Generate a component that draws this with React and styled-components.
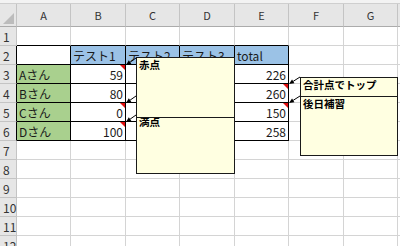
import React from 'react';
import styled, { createGlobalStyle } from 'styled-components';

const GlobalStyle = createGlobalStyle`
	html, body {
		margin: 0;
		padding: 0;
		background: #ffffff;
	}
	body {
		font-family: "Noto Sans CJK JP", "Noto Sans", sans-serif;
		overflow: hidden;
	}
`;

const GRID = '#d4d4d4';
const HEAD_LINE = '#c4c4c4';
const INK = '#000000';

const COLS = ['A', 'B', 'C', 'D', 'E', 'F', 'G'];
const WIDTHS = [54, 55, 54, 55, 54, 55, 54];
const ROWS = 12;

//Cell contents of the score table
const CELLS = {
	B2: { text: 'テスト1', bg: '#9bc2e6' },
	C2: { text: 'テスト2', bg: '#9bc2e6' },
	D2: { text: 'テスト3', bg: '#9bc2e6' },
	E2: { text: 'total', bg: '#9bc2e6' },
	A3: { text: 'Aさん', bg: '#a9d08e' },
	A4: { text: 'Bさん', bg: '#a9d08e' },
	A5: { text: 'Cさん', bg: '#a9d08e' },
	A6: { text: 'Dさん', bg: '#a9d08e' },
	B3: { text: '59', right: true, note: true },
	B4: { text: '80', right: true },
	B5: { text: '0', right: true, note: true },
	B6: { text: '100', right: true, note: true },
	E3: { text: '226', right: true },
	E4: { text: '260', right: true, note: true },
	E5: { text: '150', right: true, note: true },
	E6: { text: '258', right: true },
};

const inTable = (col, row) => row >= 2 && row <= 6 && col <= 4;

const Sheet = styled.div`
	position: relative;
	width: 400px;
	height: 246px;
	overflow: hidden;
`;

const TopStrip = styled.div`
	height: 3px;
	background: #f3f3f3;
	border-bottom: 1px solid #cfcfcf;
`;

const Grid = styled.div`
	display: grid;
	grid-template-columns: 17px ${WIDTHS.map((w) => `${w}px`).join(' ')} 1fr;
	grid-template-rows: 23px repeat(${ROWS}, 19px);
`;

const Corner = styled.div`
	position: relative;
	box-sizing: border-box;
	background: #e6e6e6;
	border-right: 1px solid ${HEAD_LINE};
	border-bottom: 1px solid #ababab;

	&::after {
		content: '';
		position: absolute;
		right: 2px;
		bottom: 2px;
		border-left: 11px solid transparent;
		border-bottom: 11px solid #bcbcbc;
	}
`;

const ColHead = styled.div`
	box-sizing: border-box;
	background: #e6e6e6;
	border-right: 1px solid ${HEAD_LINE};
	border-bottom: 1px solid #ababab;
	display: flex;
	align-items: center;
	justify-content: center;
	font-size: 11px;
	color: #333333;
`;

const RowHead = styled.div`
	box-sizing: border-box;
	background: #e6e6e6;
	border-right: 1px solid ${(p) => (p.$dark ? INK : HEAD_LINE)};
	border-bottom: 1px solid ${HEAD_LINE};
	display: flex;
	align-items: center;
	padding-left: 3px;
	font-size: 12px;
	color: #333333;
`;

const Cell = styled.div`
	position: relative;
	box-sizing: border-box;
	background: ${(p) => p.$bg || '#ffffff'};
	border-right: 1px solid ${(p) => (p.$darkRight ? INK : GRID)};
	border-bottom: 1px solid ${(p) => (p.$darkBottom ? INK : GRID)};
	display: flex;
	align-items: center;
	justify-content: ${(p) => (p.$right ? 'flex-end' : 'flex-start')};
	padding: 0 2px 0 2px;
	font-size: 12px;
	color: #1a1a1a;
	white-space: nowrap;
	overflow: hidden;
`;

//Red comment indicator in the top-right corner of a cell
const NoteMark = styled.span`
	position: absolute;
	top: 0;
	right: 0;
	width: 0;
	height: 0;
	border-top: 5px solid #e01010;
	border-left: 5px solid transparent;
`;

const Note = styled.div`
	position: absolute;
	box-sizing: border-box;
	background: #ffffe1;
	border: 1px solid #1a1a1a;
	padding: ${(p) => (p.$clipped ? '0 2px' : '1px 2px')};
	font-size: 10.5px;
	font-weight: bold;
	line-height: ${(p) => (p.$clipped ? '8px' : '12px')};
	color: #000000;
	overflow: hidden;
`;

const Arrows = styled.svg`
	position: absolute;
	left: 0;
	top: 0;
	pointer-events: none;
`;

const NOTES = [
	{ text: '赤点', x: 136, y: 57, w: 99, h: 61 },
	{ text: '満点', x: 136, y: 117, w: 99, h: 57, clipped: true },
	{ text: '合計点でトップ', x: 300, y: 77, w: 98, h: 20 },
	{ text: '後日補習', x: 300, y: 96, w: 98, h: 60 },
];

//Leader lines from each note to the cell it belongs to
const LEADERS = [
	[136, 58, 126, 65],
	[136, 96, 126, 103],
	[136, 115, 126, 122],
	[300, 77, 289, 84],
	[300, 96, 289, 103],
];

const Leader = ({ from, to }) => {
	const [x1, y1] = from;
	const [x2, y2] = to;
	const len = Math.hypot(x2 - x1, y2 - y1);
	const ux = (x2 - x1) / len;
	const uy = (y2 - y1) / len;
	const bx = x2 - ux * 5;
	const by = y2 - uy * 5;
	const head = `${x2},${y2} ${bx - uy * 2.2},${by + ux * 2.2} ${bx + uy * 2.2},${by - ux * 2.2}`;

	return (
		<g>
			<line x1={x1} y1={y1} x2={bx} y2={by} stroke="#000" strokeWidth="1" />
			<polygon points={head} fill="#000" />
		</g>
	);
};

const App = () => {
	const rows = [];

	for (let r = 1; r <= ROWS; r++) {
		rows.push(
			<RowHead key={`h${r}`} $dark={r >= 2 && r <= 6}>
				{r}
			</RowHead>
		);
		COLS.forEach((c, i) => {
			const data = CELLS[`${c}${r}`] || {};
			rows.push(
				<Cell
					key={`${c}${r}`}
					$bg={data.bg}
					$right={data.right}
					$darkRight={inTable(i, r)}
					$darkBottom={inTable(i, r) || (r === 1 && i <= 4)}
				>
					{data.text}
					{data.note && <NoteMark />}
				</Cell>
			);
		});
		rows.push(<Cell key={`x${r}`} />);
	}

	return (
		<>
			<GlobalStyle />
			<Sheet>
				<TopStrip />
				<Grid>
					<Corner />
					{COLS.map((c) => (
						<ColHead key={c}>{c}</ColHead>
					))}
					<ColHead />
					{rows}
				</Grid>

				{NOTES.map((n) => (
					<Note
						key={n.text}
						$clipped={n.clipped}
						style={{ left: n.x, top: n.y, width: n.w, height: n.h }}
					>
						{n.text}
					</Note>
				))}

				<Arrows width="400" height="246">
					{LEADERS.map(([x1, y1, x2, y2], i) => (
						<Leader key={i} from={[x1, y1]} to={[x2, y2]} />
					))}
				</Arrows>
			</Sheet>
		</>
	);
};

export default App;
